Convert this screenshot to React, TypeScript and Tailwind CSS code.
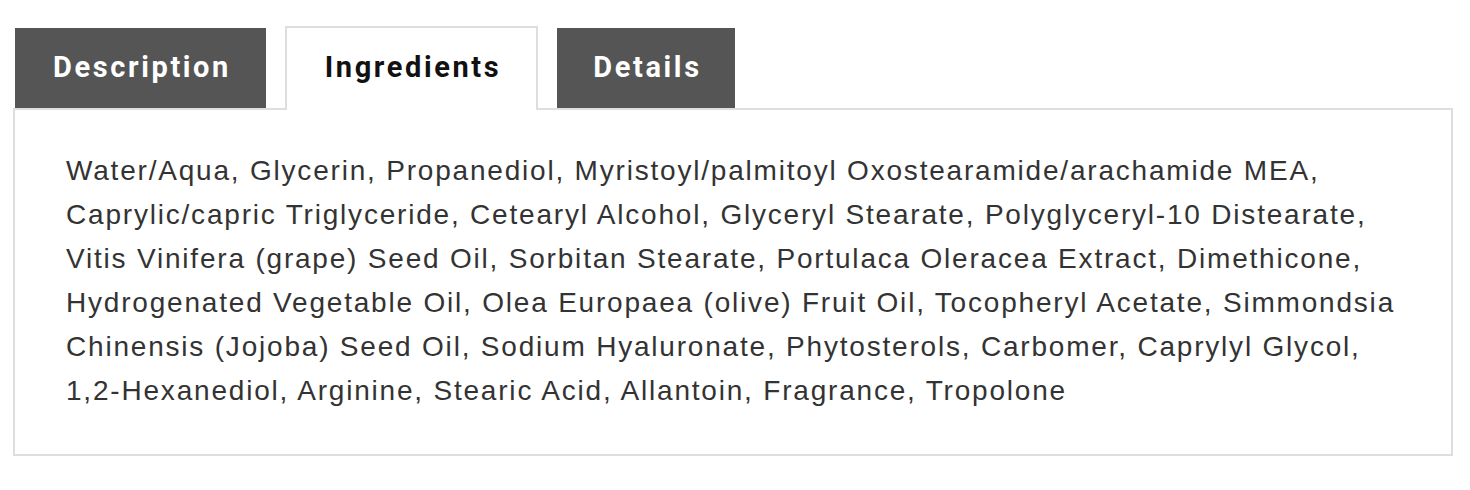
const tabs = [
  { id: 'description', label: 'Description', width: 'w-[251px]' },
  { id: 'ingredients', label: 'Ingredients', width: 'w-[253px]' },
  { id: 'details', label: 'Details', width: 'w-[178px]' },
]

// line breaks follow the original layout
const ingredientLines = [
  'Water/Aqua, Glycerin, Propanediol, Myristoyl/palmitoyl Oxostearamide/arachamide MEA,',
  'Caprylic/capric Triglyceride, Cetearyl Alcohol, Glyceryl Stearate, Polyglyceryl-10 Distearate,',
  'Vitis Vinifera (grape) Seed Oil, Sorbitan Stearate, Portulaca Oleracea Extract, Dimethicone,',
  'Hydrogenated Vegetable Oil, Olea Europaea (olive) Fruit Oil, Tocopheryl Acetate, Simmondsia',
  'Chinensis (Jojoba) Seed Oil, Sodium Hyaluronate, Phytosterols, Carbomer, Caprylyl Glycol,',
  '1,2-Hexanediol, Arginine, Stearic Acid, Allantoin, Fragrance, Tropolone',
]

export default function App() {
  const active = 'ingredients'

  return (
    <div className="min-h-[490px] bg-white pl-[13px] pt-[26px]">
      <div className="w-[1440px]">
        {/* Tabs */}
        <div className="flex items-end gap-[19px] pl-[2px]">
          {tabs.map((tab) =>
            tab.id === active ? (
              <div
                key={tab.id}
                className={`${tab.width} relative z-10 -mb-[2px] flex h-[84px] items-center justify-center border-2 border-b-0 border-[#dedede] bg-white pb-[2px] pl-[3px] text-[29px] font-bold tracking-[2.6px] text-[#111]`}
                style={{ fontFamily: 'Roboto, "Liberation Sans", sans-serif' }}
              >
                {tab.label}
              </div>
            ) : (
              <div
                key={tab.id}
                className={`${tab.width} flex h-[80px] items-center justify-center bg-[#555555] pl-[3px] text-[29px] font-bold tracking-[2.6px] text-white`}
                style={{ fontFamily: 'Roboto, "Liberation Sans", sans-serif' }}
              >
                {tab.label}
              </div>
            )
          )}
        </div>

        {/* Tab content */}
        <div className="border-2 border-[#dedede] pb-[41px] pl-[51px] pr-[20px] pt-[39px]">
          <div
            className="text-[28px] leading-[44px] tracking-[1.8px] text-[#333333]"
            style={{ fontFamily: '"Liberation Sans", Arial, sans-serif' }}
          >
            {ingredientLines.map((line) => (
              <p key={line} className="whitespace-nowrap">
                {line}
              </p>
            ))}
          </div>
        </div>
      </div>
    </div>
  )
}
